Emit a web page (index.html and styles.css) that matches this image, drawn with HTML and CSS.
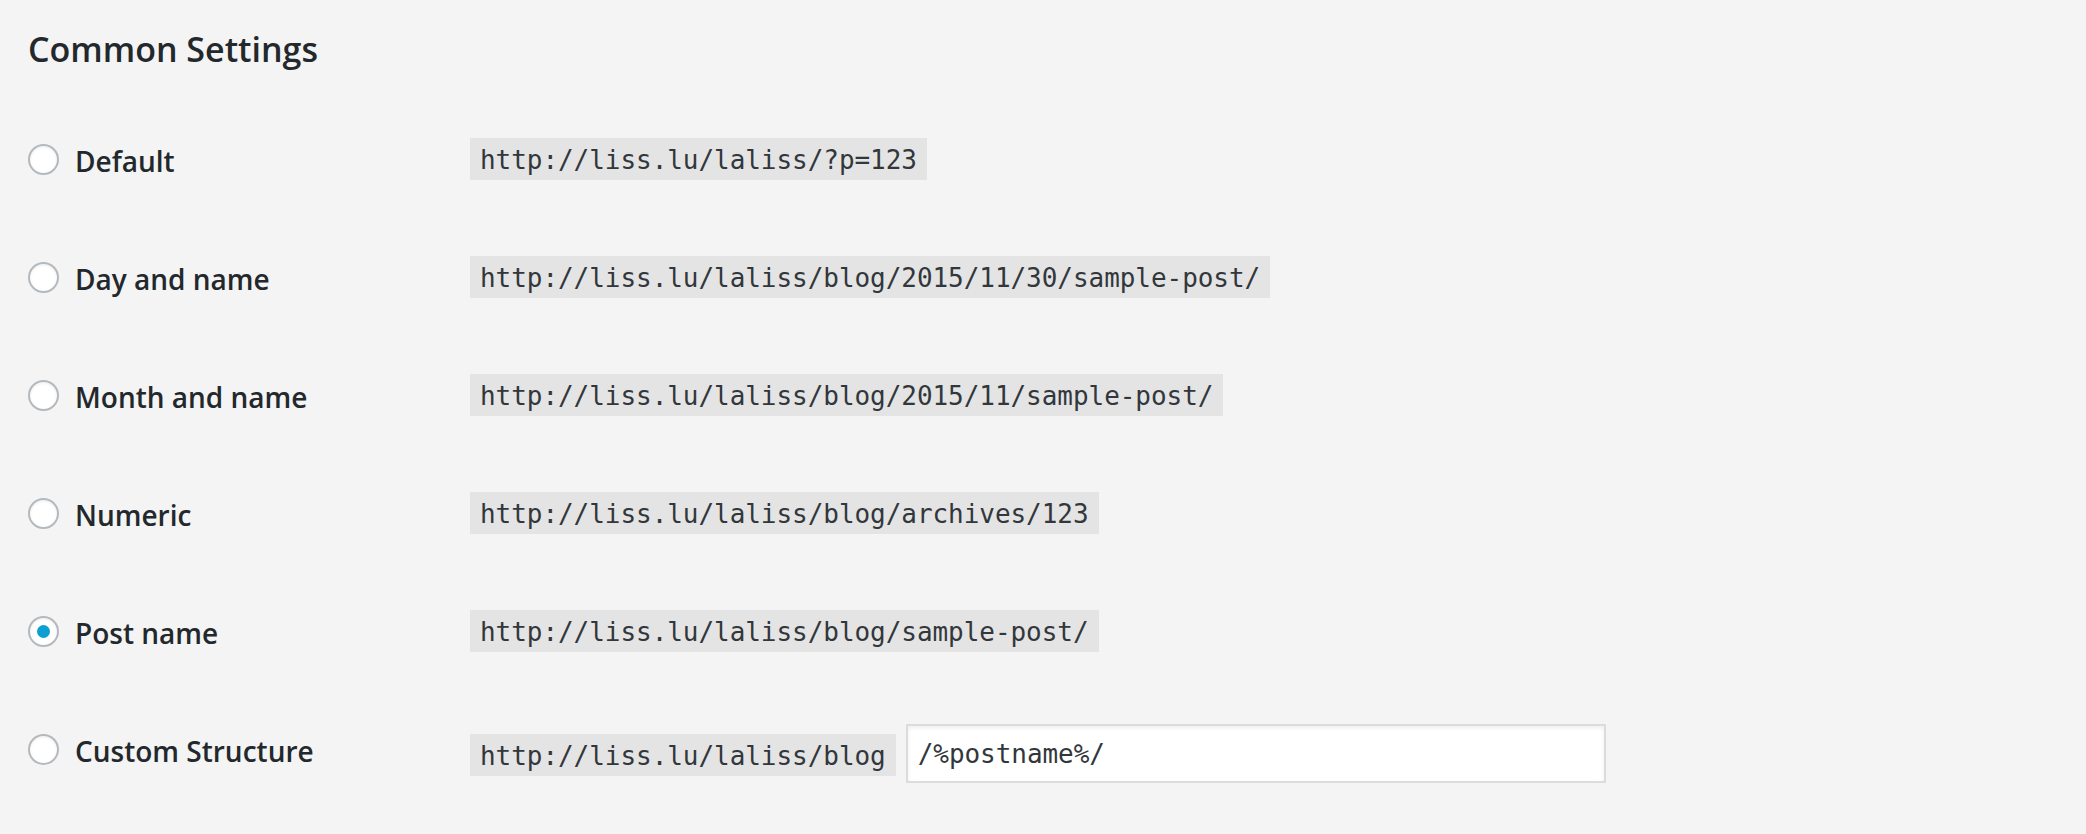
FILE: index.html
```html
<!DOCTYPE html>
<html lang="en">
<head>
<meta charset="utf-8">
<title>Common Settings</title>
<link rel="stylesheet" href="styles.css">
</head>
<body>
<div class="page">
  <h2 class="title">Common Settings</h2>
  <div class="options">
    <div class="row">
      <label class="choice"><input type="radio" name="permalink" class="radio"><span class="label">Default</span></label>
      <div class="value"><code class="url">http://liss.lu/laliss/?p=123</code></div>
    </div>
    <div class="row">
      <label class="choice"><input type="radio" name="permalink" class="radio"><span class="label">Day and name</span></label>
      <div class="value"><code class="url">http://liss.lu/laliss/blog/2015/11/30/sample-post/</code></div>
    </div>
    <div class="row">
      <label class="choice"><input type="radio" name="permalink" class="radio"><span class="label">Month and name</span></label>
      <div class="value"><code class="url">http://liss.lu/laliss/blog/2015/11/sample-post/</code></div>
    </div>
    <div class="row">
      <label class="choice"><input type="radio" name="permalink" class="radio"><span class="label">Numeric</span></label>
      <div class="value"><code class="url">http://liss.lu/laliss/blog/archives/123</code></div>
    </div>
    <div class="row">
      <label class="choice"><input type="radio" name="permalink" class="radio" checked><span class="label">Post name</span></label>
      <div class="value"><code class="url">http://liss.lu/laliss/blog/sample-post/</code></div>
    </div>
    <div class="row">
      <label class="choice"><input type="radio" name="permalink" class="radio"><span class="label">Custom Structure</span></label>
      <div class="value custom"><code class="url">http://liss.lu/laliss/blog</code><input type="text" class="structure" value="/%postname%/"></div>
    </div>
  </div>
</div>
</body>
</html>
```

FILE: styles.css
```css
html, body {
  margin: 0;
  padding: 0;
  background: #f4f4f4;
}

.page {
  padding: 26px 28px 0;
}

.title {
  margin: 0 0 28px;
  font-family: "Open Sans", "Noto Sans", sans-serif;
  font-weight: 600;
  font-size: 34px;
  line-height: normal;
  color: #23282d;
}

.row {
  display: grid;
  grid-template-columns: 442px 1fr;
  align-items: center;
  height: 118px;
}

.choice {
  display: flex;
  align-items: center;
  gap: 16px;
}

.radio {
  appearance: none;
  -webkit-appearance: none;
  box-sizing: border-box;
  width: 31px;
  height: 31px;
  margin: 0;
  border: 2px solid #b4b9be;
  border-radius: 50%;
  background: #fff;
  box-shadow: inset 0 1px 3px rgba(0, 0, 0, 0.08);
  display: grid;
  place-items: center;
}

.radio:checked::before {
  content: "";
  width: 13px;
  height: 13px;
  border-radius: 50%;
  background: #0e9fd1;
}

.label {
  padding-top: 3px;
  font-family: "Open Sans", "Noto Sans", sans-serif;
  font-weight: 600;
  font-size: 28px;
  line-height: normal;
  color: #23282d;
}

.value {
  display: flex;
  align-items: center;
}

.url {
  display: inline-block;
  font-family: "DejaVu Sans Mono", "Liberation Mono", monospace;
  font-size: 26px;
  letter-spacing: -0.05px;
  line-height: 32px;
  padding: 6px 10px 4px;
  background: #e4e4e4;
  color: #32373c;
  white-space: nowrap;
}

.custom {
  gap: 10px;
  padding-top: 9px;
}

.custom .url {
  margin-top: 3px;
}

.structure {
  box-sizing: border-box;
  width: 700px;
  height: 59px;
  margin: 0;
  padding: 0 10px;
  border: 2px solid #dcdcdc;
  background: #fff;
  box-shadow: inset 0 2px 4px rgba(0, 0, 0, 0.07);
  font-family: "DejaVu Sans Mono", "Liberation Mono", monospace;
  font-size: 26px;
  letter-spacing: -0.05px;
  color: #32373c;
  outline: none;
}
```
